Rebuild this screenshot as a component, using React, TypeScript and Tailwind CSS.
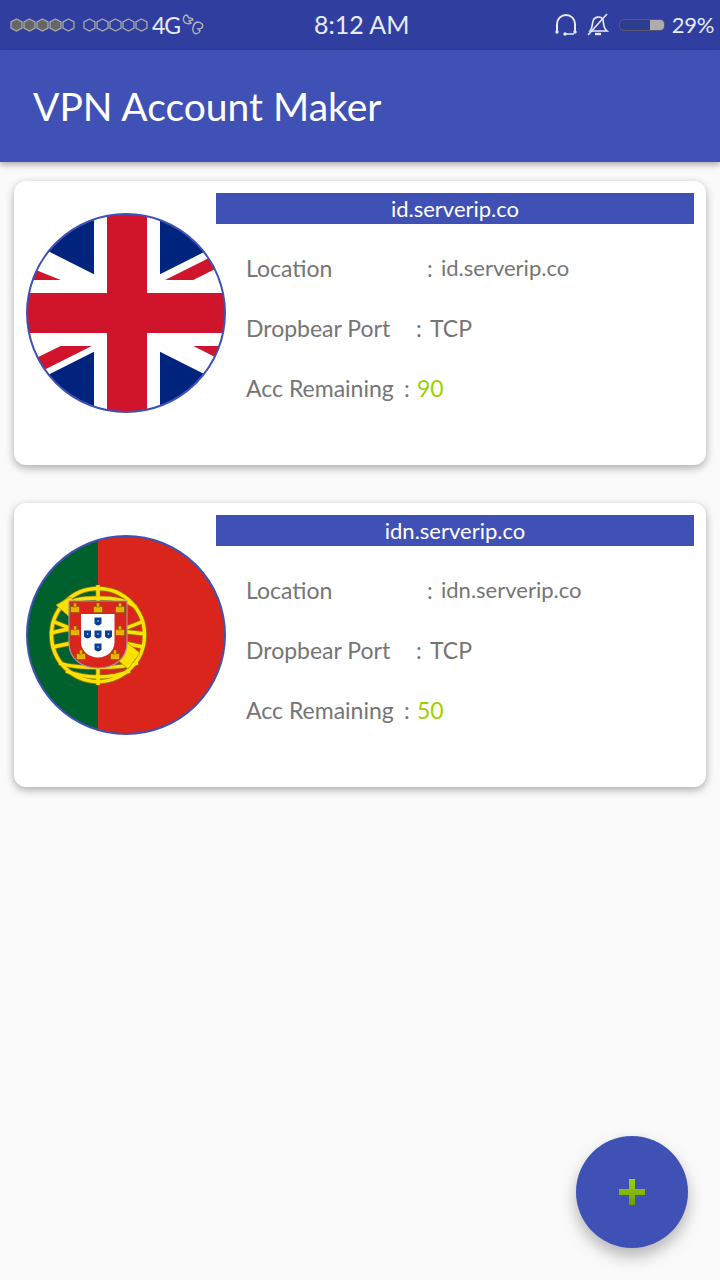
const font = "font-['Lato','Noto_Sans',sans-serif]";

function Hex({ filled }: { filled?: boolean }) {
  return (
    <svg width="13" height="14" viewBox="0 0 13 14" className="shrink-0">
      <polygon
        points="6.5,1 12,4 12,10 6.5,13 1,10 1,4"
        fill={filled ? '#666666' : 'none'}
        stroke="#a9a9a9"
        strokeWidth="1.3"
      />
    </svg>
  );
}

function LinkGlyph() {
  return (
    <svg width="22" height="24" viewBox="0 0 22 24" fill="none" stroke="#b0b0b8" strokeWidth="1.4" className="ml-[2px]">
      <path d="M5 2 C2 2 1 5 1.500 7.500 C2.500 10.500 6 11.500 9 10 L7 8 L11 7 C11 5 8 5 7 5 Z" />
      <path d="M15 9 C19 9 21.500 11.500 20.500 14 C20 15.500 17.500 16 16 16 L18 18 C16.500 21.500 12.500 21.500 11.500 19 C10 16.500 11 10.500 15 9 Z" />
    </svg>
  );
}

function StatusBar() {
  return (
    <div className={`${font} relative flex h-[50px] items-center justify-between bg-[#303f9f] pl-[10px] pr-[6px] text-white`}>
      <div className="flex items-center">
        <div className="flex">
          <Hex filled /><Hex filled /><Hex filled /><Hex filled /><Hex />
        </div>
        <div className="ml-[8px] flex">
          <Hex /><Hex /><Hex /><Hex /><Hex />
        </div>
        <span className="ml-[4px] text-[23px] leading-none tracking-[-1px] text-[#e8eaf6]">4G</span>
        <LinkGlyph />
      </div>
      <span className="absolute left-[314px] top-[8px] text-[25px] leading-[32px] text-[#e8eaf6]">8:12 AM</span>
      <div className="flex items-center">
        <svg width="22" height="22" viewBox="0 0 22 22" fill="none" stroke="#e8eaf6" strokeWidth="2">
          <path d="M2 17 V10 A9 9 0 0 1 20 10 V17" />
          <circle cx="2" cy="18" r="1.700" fill="#e8eaf6" stroke="none" />
          <circle cx="20" cy="18" r="1.700" fill="#e8eaf6" stroke="none" />
          <circle cx="10" cy="20" r="1.700" fill="#e8eaf6" stroke="none" />
          <path d="M10 20 H19" strokeWidth="1.500" />
        </svg>
        <svg width="22" height="24" viewBox="0 0 22 24" fill="none" stroke="#e8eaf6" strokeWidth="1.600" className="ml-[10px]">
          <path d="M3 18 C6 14 5 11 6 8 C7 4 14 2 16 7 C17 11 16 15 20 18 Z" />
          <path d="M8 21 H14" strokeWidth="2.400" />
          <path d="M1 22 L20 1" />
        </svg>
        <div className="ml-[10px] flex h-[12px] w-[46px] overflow-hidden rounded-[5px] border-[1.500px] border-[#555a70] bg-[#2f3d8f]">
          <div className="ml-auto w-[14px] bg-[#adadad]" />
        </div>
        <span className="ml-[7px] text-[22px] leading-none tracking-[-0.3px] text-[#e8eaf6]">29%</span>
      </div>
    </div>
  );
}

function UkFlag() {
  return (
    <svg width="200" height="200" viewBox="0 0 200 200" className="block">
      <defs>
        <clipPath id="uk-clip"><circle cx="100" cy="100" r="99" /></clipPath>
      </defs>
      <g clipPath="url(#uk-clip)">
        <rect width="200" height="200" fill="#ffffff" />
        <g fill="#00247d">
          <polygon points="0,0 68,0 68,61.300 0,27" />
          <polygon points="134,0 200,0 200,28 134,61.300" />
          <polygon points="0,200 68,200 68,138.700 0,173" />
          <polygon points="134,200 200,200 200,172 134,138.700" />
        </g>
        <g fill="#cf142b">
          <polygon points="0,53 34.700,67 0,67" />
          <polygon points="139,67 167.300,67 200,50.600 200,36.500" />
          <polygon points="34.700,133 65.700,133 0,166 0,150" />
          <polygon points="167.300,133 200,133 200,149.600" />
          <rect x="81" y="0" width="40" height="200" />
          <rect x="0" y="80" width="200" height="40" />
        </g>
      </g>
      <circle cx="100" cy="100" r="99" fill="none" stroke="#3f51b5" strokeWidth="2" />
    </svg>
  );
}

const castles = [[49, 73], [72, 73], [94, 73], [49, 96], [94, 96], [55, 120], [89, 120]];
const quinas = [[72, 87], [61.500, 100], [72, 100], [82.500, 100], [72, 113]];
const sphereBands = [
  'M72 50 V150',
  'M24 99 C40 92 60 92 120 99',
  'M26 86 L46 94',
  'M118 86 L98 94',
  'M34 72 C50 60 94 60 110 72',
  'M27 112 L46 108',
  'M117 112 L98 108',
  'M33 128 C50 134 94 134 112 128',
  'M40 136 C60 144 84 144 104 136',
];

function PtFlag() {
  return (
    <svg width="200" height="200" viewBox="0 0 200 200" className="block">
      <defs>
        <clipPath id="pt-clip"><circle cx="100" cy="100" r="99" /></clipPath>
      </defs>
      <g clipPath="url(#pt-clip)">
        <rect width="200" height="200" fill="#da251d" />
        <rect width="72" height="200" fill="#00612f" />
      </g>
      <circle cx="100" cy="100" r="99" fill="none" stroke="#3f51b5" strokeWidth="2" />
      {/* armillary sphere */}
      <g fill="none" stroke="#8a7a10" strokeWidth="5">
        <circle cx="72" cy="100" r="46.500" />
        {sphereBands.map((d) => <path key={d} d={d} />)}
      </g>
      <g fill="none" stroke="#ffe100" strokeWidth="3.400">
        <circle cx="72" cy="100" r="46.500" />
        {sphereBands.map((d) => <path key={d} d={d} />)}
      </g>
      <path d="M30 70 L44 62 L114 118 L102 134 Z" fill="#ffe100" stroke="#a89510" strokeWidth="0.800" />
      {/* shield */}
      <path d="M43 66 H101 V108 C101 124 88 133 72 133 C56 133 43 124 43 108 Z" fill="#da251d" stroke="#9a9a9a" strokeWidth="1.200" />
      <path d="M55 79 H88.500 V107 C88.500 116 81 122.500 72 122.500 C63 122.500 55 116 55 107 Z" fill="#ffffff" />
      {castles.map(([x, y]) => (
        <g key={`${x}-${y}`}>
          <rect x={x - 4.500} y={y - 1.500} width="9" height="6" fill="#e8b400" stroke="#7a5a00" strokeWidth="0.600" />
          <rect x={x - 1.500} y={y - 5} width="3" height="4" fill="#e8b400" stroke="#7a5a00" strokeWidth="0.500" />
        </g>
      ))}
      {quinas.map(([x, y]) => (
        <g key={`${x}-${y}`}>
          <path d={`M${x - 3.500} ${y - 4.500} h7 v6 q-3.500 4 -7 0 z`} fill="#0b3f94" />
          <circle cx={x} cy={y - 1} r="0.800" fill="#d5e0f0" />
        </g>
      ))}
    </svg>
  );
}

function ServerCard({ host, remaining, flag }: { host: string; remaining: number; flag: React.ReactNode }) {
  return (
    <div className="flex h-[284px] rounded-[12px] bg-white pl-[12px] pr-[12px] pt-[12px] shadow-[0_3px_8px_rgba(0,0,0,0.32)]">
      <div className="mt-[20px] h-[200px] w-[200px] shrink-0">{flag}</div>
      <div className="-ml-[10px] min-w-0 flex-1">
        <div className="flex h-[31px] items-center justify-center bg-[#3f51b5] text-[22px] leading-none text-white">
          {host}
        </div>
        <div className="pl-[30px] pt-[14px] text-[23px] leading-[60px] text-[#757575]">
          <div className="flex">
            <span className="w-[181px]">Location</span>
            <span className="w-[14px]">:</span>
            <span className="text-[22px]">{host}</span>
          </div>
          <div className="flex">
            <span className="w-[170px]">Dropbear Port</span>
            <span className="w-[14px]">:</span>
            <span>TCP</span>
          </div>
          <div className="flex">
            <span className="w-[158px]">Acc Remaining</span>
            <span className="w-[13px]">:</span>
            <span className="text-[#9bd100]">{remaining}</span>
          </div>
        </div>
      </div>
    </div>
  );
}

export default function App() {
  return (
    <div className={`${font} relative h-[1280px] w-[720px] overflow-hidden bg-[#fafafa]`}>
      <StatusBar />
      <div className="relative z-10 flex h-[112px] items-center bg-[#3f51b5] pl-[33px] shadow-[0_3px_6px_rgba(0,0,0,0.3)]">
        <h1 className="text-[39px] leading-none text-white">VPN Account Maker</h1>
      </div>
      <div className="flex flex-col gap-[38px] px-[14px] pt-[19px]">
        <ServerCard host="id.serverip.co" remaining={90} flag={<UkFlag />} />
        <ServerCard host="idn.serverip.co" remaining={50} flag={<PtFlag />} />
      </div>
      <button className="absolute left-[576px] top-[1136px] flex h-[112px] w-[112px] items-center justify-center rounded-full bg-[#3f51b5] shadow-[0_8px_16px_rgba(0,0,0,0.28)]">
        <svg width="28" height="28" viewBox="0 0 28 28">
          <defs>
            <linearGradient id="plus-fill" x1="0" y1="0" x2="0" y2="1">
              <stop offset="0%" stopColor="#9bd600" />
              <stop offset="100%" stopColor="#6e9c00" />
            </linearGradient>
          </defs>
          <path
            d="M11 1 h6 v10 h10 v6 h-10 v10 h-6 v-10 h-10 v-6 h10 z"
            fill="url(#plus-fill)"
          />
        </svg>
      </button>
    </div>
  );
}
